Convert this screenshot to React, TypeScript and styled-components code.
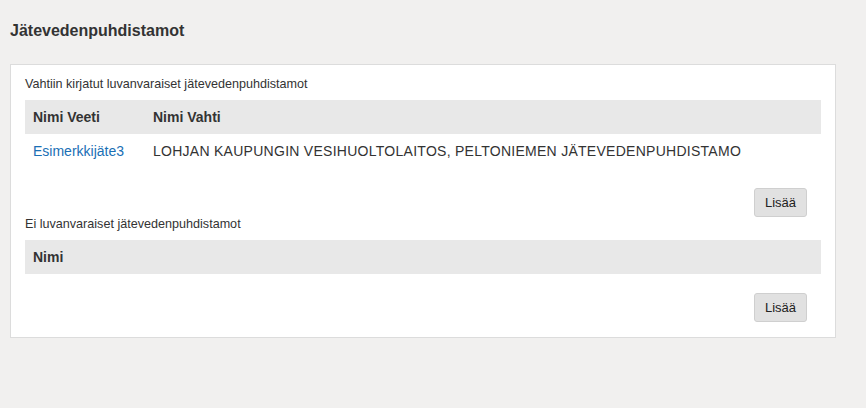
import styled, { createGlobalStyle } from "styled-components";

const Global = createGlobalStyle`
  html, body {
    margin: 0;
    padding: 0;
    background: #f1f0ef;
    font-family: "Liberation Sans", Arial, sans-serif;
    color: #333;
  }
`;

const Page = styled.div`
  padding: 20px 30px 0 10px;
  width: 826px;
`;

const Title = styled.h2`
  margin: 0 0 22px;
  font-size: 16px;
  font-weight: 700;
  line-height: 22px;
  color: #333;
`;

const Panel = styled.div`
  background: #fff;
  border: 1px solid #dcdcdc;
  padding: 11px 14px 16px;
`;

const Caption = styled.div`
  font-size: 12.6px;
  line-height: 16px;
  color: #333;
  margin-bottom: 8px;
  padding-top: 1px;
  margin-top: -1px;
`;

const Table = styled.table`
  width: 100%;
  border-collapse: collapse;
  table-layout: fixed;
  font-size: 14px;
`;

const Th = styled.th<{ $w?: number }>`
  box-sizing: border-box;
  background: #e8e8e8;
  text-align: left;
  font-weight: 700;
  height: 34px;
  padding: 0 8px;
  color: #333;
  ${(p) => (p.$w ? `width: ${p.$w}px;` : "")}
`;

const Td = styled.td<{ $caps?: boolean }>`
  height: 34px;
  padding: 0 8px;
  color: #333;
  white-space: nowrap;
  letter-spacing: ${(p) => (p.$caps ? "0.27px" : "0")};
`;

const Link = styled.a`
  color: #1a6fb5;
  text-decoration: none;
`;

const Actions = styled.div<{ $top: number }>`
  display: flex;
  justify-content: flex-end;
  padding: ${(p) => p.$top}px 14px 0 0;
`;

const Button = styled.button`
  height: 29px;
  padding: 0 10px;
  font-family: inherit;
  font-size: 13px;
  color: #222;
  background: #e1e1e1;
  border: 1px solid #cfcfcf;
  border-radius: 3px;
  margin-bottom: -1px;
`;

export default function App() {
  return (
    <>
      <Global />
      <Page>
        <Title>Jätevedenpuhdistamot</Title>
        <Panel>
          <Caption>Vahtiin kirjatut luvanvaraiset jätevedenpuhdistamot</Caption>
          <Table>
            <thead>
              <tr>
                <Th $w={120}>Nimi Veeti</Th>
                <Th>Nimi Vahti</Th>
              </tr>
            </thead>
            <tbody>
              <tr>
                <Td>
                  <Link href="#">Esimerkkijäte3</Link>
                </Td>
                <Td $caps>LOHJAN KAUPUNGIN VESIHUOLTOLAITOS, PELTONIEMEN JÄTEVEDENPUHDISTAMO</Td>
              </tr>
            </tbody>
          </Table>
          <Actions $top={20}>
            <Button>Lisää</Button>
          </Actions>
          <Caption>Ei luvanvaraiset jätevedenpuhdistamot</Caption>
          <Table>
            <thead>
              <tr>
                <Th>Nimi</Th>
              </tr>
            </thead>
          </Table>
          <Actions $top={19}>
            <Button>Lisää</Button>
          </Actions>
        </Panel>
      </Page>
    </>
  );
}
